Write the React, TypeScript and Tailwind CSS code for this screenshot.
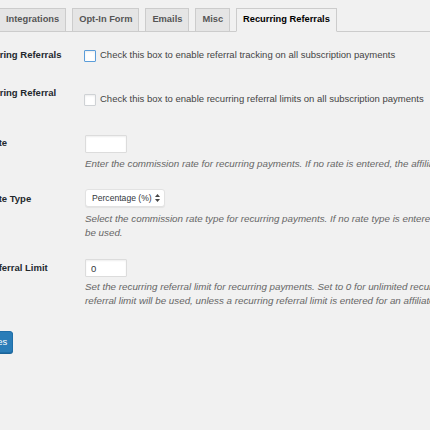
const tabs = ["Integrations", "Opt-In Form", "Emails", "Misc", "Recurring Referrals"];

function Checkbox({ focused }: { focused?: boolean }) {
  return (
    <span
      className={`-ml-px h-[12px] w-[12px] shrink-0 rounded-[1px] border bg-white shadow-[inset_0_1px_2px_rgba(0,0,0,0.08)] ${
        focused
          ? "border-[#5b9dd9] shadow-[0_0_2px_rgba(30,140,190,0.8)]"
          : "border-[#cfd2d5]"
      }`}
    />
  );
}

function TextInput({ value }: { value?: string }) {
  return (
    <input
      readOnly
      defaultValue={value}
      className="block h-[18px] w-[42px] rounded-[1px] border border-[#dcdcdc] bg-white pl-[5px] text-[9.5px] text-[#32373c] shadow-[inset_0_1px_2px_rgba(0,0,0,0.07)] outline-none"
    />
  );
}

function Description({ lines }: { lines: string[] }) {
  return (
    <div className="text-[9.8px] italic leading-[13.5px] whitespace-nowrap text-[#666]">
      {lines.map((line) => (
        <div key={line}>{line}</div>
      ))}
    </div>
  );
}

export default function App() {
  return (
    <div className="h-[430px] w-[430px] overflow-hidden bg-[#f1f1f1] font-['Liberation_Sans',Arial,sans-serif] text-[9.5px] text-[#444]">
      <nav className="-ml-px flex w-[440px] items-end gap-[6px] border-b border-[#ccc] pt-[8px]">
        {tabs.map((tab) => {
          const active = tab === "Recurring Referrals";
          return (
            <span
              key={tab}
              className={`-mb-px flex h-[24px] items-center border px-[6px] text-[9.3px] font-bold ${
                active
                  ? "border-[#ccc] border-b-[#f1f1f1] bg-[#f1f1f1] text-[#000]"
                  : "border-[#ccc] bg-[#e5e5e5] text-[#555]"
              }`}
            >
              {tab}
            </span>
          );
        })}
      </nav>

      <div className="-ml-[61px] mt-[3px] w-[620px]">
        {/* enable */}
        <div className="flex h-[38px]">
          <div className="w-[146px] shrink-0 pr-[7px] pt-[14px] font-bold leading-[12px] text-[#23282d]">
            Enable Recurring Referrals
          </div>
          <div className="pt-[11px]">
            <label className="flex h-[19px] items-center gap-[4px]">
              <Checkbox focused />
              <span>Check this box to enable referral tracking on all subscription payments</span>
            </label>
          </div>
        </div>

        {/* limits */}
        <div className="flex h-[50px]">
          <div className="w-[146px] shrink-0 pr-[7px] pt-[14px] font-bold leading-[12px] text-[#23282d]">
            Enable Recurring Referral Limits
          </div>
          <div className="pt-[17px]">
            <label className="flex h-[19px] items-center gap-[4px]">
              <Checkbox />
              <span>Check this box to enable recurring referral limits on all subscription payments</span>
            </label>
          </div>
        </div>

        {/* rate */}
        <div className="flex h-[56px]">
          <div className="w-[146px] shrink-0 pr-[7px] pt-[14px] font-bold leading-[12px] text-[#23282d]">
            Recurring Rate
          </div>
          <div className="pt-[12px]">
            <TextInput />
            <div className="mt-[4px]">
              <Description
                lines={[
                  "Enter the commission rate for recurring payments. If no rate is entered, the affiliate's rate will be used.",
                ]}
              />
            </div>
          </div>
        </div>

        {/* rate type */}
        <div className="flex h-[69px]">
          <div className="w-[146px] shrink-0 pr-[7px] pt-[14px] font-bold leading-[12px] text-[#23282d]">
            Recurring Rate Type
          </div>
          <div className="pt-[10px]">
            <div className="flex h-[18px] w-[80px] items-center justify-between rounded-[3px] border border-[#e2e2e2] bg-white pl-[6px] pr-[4px] text-[8.6px] text-[#32373c] shadow-[0_1px_1px_rgba(0,0,0,0.06)]">
              <span>Percentage (%)</span>
              <svg width="5" height="8" viewBox="0 0 5 8" className="fill-[#444]">
                <path d="M2.5 0 L5 3 H0 Z" />
                <path d="M0 5 H5 L2.5 8 Z" />
              </svg>
            </div>
            <div className="mt-[5px]">
              <Description
                lines={[
                  "Select the commission rate type for recurring payments. If no rate type is entered, the affiliate's rate type will",
                  "be used.",
                ]}
              />
            </div>
          </div>
        </div>

        {/* referral limit */}
        <div className="flex">
          <div className="w-[146px] shrink-0 pr-[7px] pt-[14px] font-bold leading-[12px] text-[#23282d]">
            Recurring Referral Limit
          </div>
          <div className="pt-[11px]">
            <TextInput value="0" />
            <div className="mt-[3px]">
              <Description
                lines={[
                  "Set the recurring referral limit for recurring payments. Set to 0 for unlimited recurring referrals. If no limit is entered, the global recurring",
                  "referral limit will be used, unless a recurring referral limit is entered for an affiliate.",
                ]}
              />
            </div>
          </div>
        </div>

        <div className="mt-[24px]">
          <button
            type="button"
            className="h-[22px] rounded-[3px] border border-[#1f6ea8] bg-[#2a7db8] px-[5px] text-[9.5px] text-white shadow-[0_1px_0_#1b6498]"
          >
            Save Changes
          </button>
        </div>
      </div>
    </div>
  );
}
